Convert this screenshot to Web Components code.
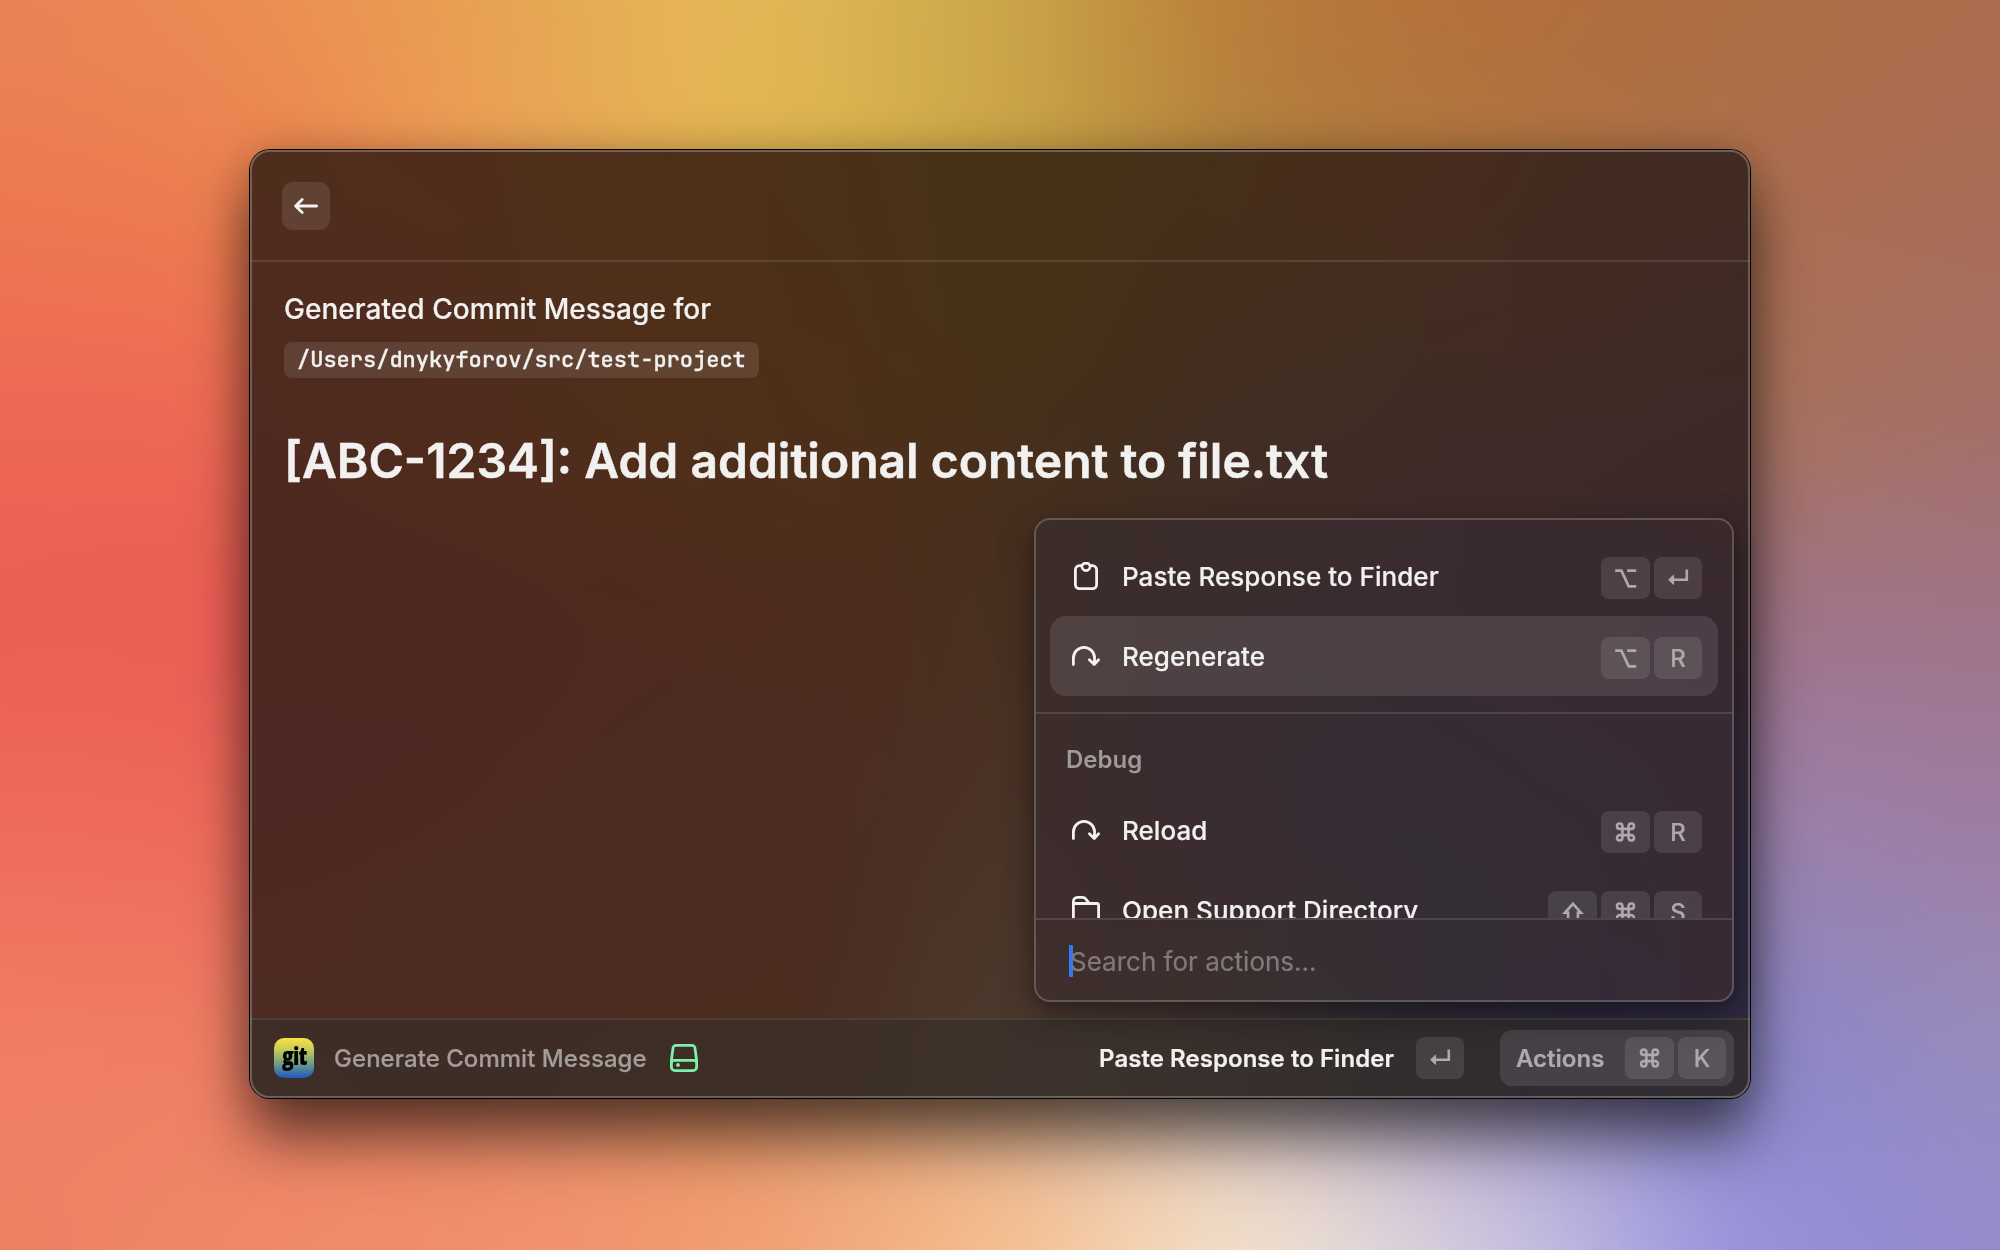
<!DOCTYPE html>
<html lang="en"><head><meta charset="utf-8"><title>Generate Commit Message</title>
<style>html,body{margin:0;height:100%;overflow:hidden}body{font-family:Inter,"Noto Sans",sans-serif}</style></head>
<body>
<rc-desktop>
  <rc-window>
    <rc-back-button slot="header"></rc-back-button>
    <rc-detail slot="content">
      <span slot="title">Generated Commit Message for</span>
      <span slot="path">/Users/dnykyforov/src/test-project</span>
      <span slot="message">[ABC-1234]: Add additional content to file.txt</span>
    </rc-detail>
    <rc-footer slot="footer"></rc-footer>
    <rc-action-panel slot="overlay"></rc-action-panel>
  </rc-window>
</rc-desktop>
<script>
const define=(name,html,setup)=>customElements.define(name,class extends HTMLElement{
  constructor(){super();this.attachShadow({mode:'open'})}
  connectedCallback(){this.shadowRoot.innerHTML=typeof html==='function'?html(this):html;if(setup)setup(this)}
});

// Paints a smooth colour mesh from a grid of colours (Catmull-Rom between the nodes).
class MeshGradient extends HTMLElement{
  constructor(){super();this.attachShadow({mode:'open'}).innerHTML='<style>:host{display:block}canvas{display:block;width:100%;height:100%}</style><canvas></canvas>'}
  set grid(rows){
    const g=rows.map(r=>r.trim().split(/\s+/).map(h=>[0,2,4].map(i=>parseInt(h.substr(i,2),16))));
    const c=this.shadowRoot.querySelector('canvas'),W=c.width=400,H=c.height=250,x2=c.getContext('2d'),im=x2.createImageData(W,H);
    const R=g.length,C=g[0].length,cl=(v,m)=>Math.max(0,Math.min(m,v));
    const cr=(a,b,c,d,t)=>b+.5*t*(c-a+t*(2*a-5*b+4*c-d+t*(3*(b-c)+d-a)));
    for(let y=0;y<H;y++){const fy=y/(H-1)*(R-1),iy=Math.min(R-2,Math.floor(fy)),ty=fy-iy;
      for(let x=0;x<W;x++){const fx=x/(W-1)*(C-1),ix=Math.min(C-2,Math.floor(fx)),tx=fx-ix,o=(y*W+x)*4;
        for(let k=0;k<3;k++){const v=[];
          for(let j=-1;j<3;j++){const r=g[cl(iy+j,R-1)];v.push(cr(r[cl(ix-1,C-1)][k],r[ix][k],r[ix+1][k],r[cl(ix+2,C-1)][k],tx))}
          im.data[o+k]=cr(v[0],v[1],v[2],v[3],ty)}
        im.data[o+3]=255}}
    x2.putImageData(im,0,0);
  }
}
customElements.define('rc-mesh',MeshGradient);

const wallpaper=[
 'ea8354 eb8d53 e7a353 e2b654 cba549 b97e3b b4703c ae6e46 ac6d4e',
 'ec7850 ec8050 eb9d55 dfb150 c9a347 b08240 ae7543 ac6f50 a96e58',
 'ed6855 ec6c54 e08550 d09a50 b8904a a57a48 a8724f a8725e a47068',
 'ec6054 ea6055 d87055 c08050 a88050 a07058 a07068 a07486 a07488',
 'ee6c5c ec6c5c dc7860 c88860 b09070 a08088 9a789a 9a80aa 9c7ea4',
 'f07c64 ee7e64 e88866 e09468 d8a888 c8b0b0 a898c0 9088c6 978abc',
 'ee8064 f08868 f0906c f1a074 f4be92 efdcca cac2de 9994da 948bcb'];
const glass=[
 '4f2d1c 502d1b 4e2f19 4b3116 473216 46301a 482c1c 442b20 402a22',
 '4f2b1f 4f2c1d 4f2f1a 4c3016 473216 442e1c 432d20 422b23 3f2a24',
 '4f2920 4f2b1e 4f2d1b 4d2f1a 472f1c 412d22 3f2c27 3e2a28 3c2928',
 '4f2822 4f2820 4e2a1f 4d2c1e 483020 422d26 3f2a2a 3c292b 38272c',
 '4e2822 4e2922 4d2b22 4c2c21 4a3225 443028 3b2c2e 352a31 32283a',
 '4e2a22 4d2b22 4c2c21 4b2d21 4b362a 433230 332c34 2e2838 2e2840',
 '4f2c22 4e2c22 4d2d20 4b2f21 4b392d 413432 302c35 2b2740 2e2a42'];
const panel=[
 '3c2d2a 3a2c2a 3a2b2d 392a2e 3a2a2c',
 '3c2d2b 3a2c2e 392b30 392a30 382932',
 '3c2d2b 392c30 352c34 372b35 382a34',
 '3d2d2c 3a2c2f 362d34 352c34 382a33',
 '3e2e2c 3b302e 362e33 352c38 372a35'];

define('rc-desktop',`<style>
 :host{display:grid;width:2000px;height:1250px;overflow:hidden}
 rc-mesh,.stage{grid-area:1/1}
 .stage{display:flex;justify-content:center;align-items:flex-start;padding-top:150px;z-index:1}
</style><rc-mesh></rc-mesh><div class="stage"><slot></slot></div>`,e=>{e.shadowRoot.querySelector('rc-mesh').grid=wallpaper});

define('rc-window',`<style>
 :host{display:grid;position:relative;width:1500px;height:948px;border-radius:20px;color:#f2f1f0;-webkit-text-stroke:.2px;letter-spacing:.045px;
  box-shadow:0 0 0 1px #000,0 40px 60px rgba(0,0,0,.58),0 0 44px rgba(0,0,0,.22)}
 rc-mesh{grid-area:1/1;border-radius:20px;overflow:hidden}
 .frame{grid-area:1/1;display:flex;flex-direction:column;z-index:1;border-radius:20px;overflow:hidden;min-height:0}
 header{height:110px;box-sizing:border-box;padding:32px;display:flex}
 main{flex:1;border-top:2px solid rgba(255,255,255,.11);min-height:0}
 footer{height:80px;box-sizing:border-box;border-top:2px solid rgba(255,255,255,.08);background:rgba(54,46,42,.62)}
 .edge{grid-area:1/1;z-index:2;border:2px solid rgba(255,255,255,.24);border-radius:20px;pointer-events:none}
 .overlay{position:absolute;right:16px;bottom:96px;z-index:3}
</style><rc-mesh></rc-mesh>
<div class="frame"><header><slot name="header"></slot></header><main><slot name="content"></slot></main><footer><slot name="footer"></slot></footer></div>
<div class="edge"></div><div class="overlay"><slot name="overlay"></slot></div>`,e=>{e.shadowRoot.querySelector('rc-mesh').grid=glass});

define('rc-back-button',`<style>:host{display:flex;width:48px;height:48px;border-radius:11px;background:rgba(255,255,255,.1);align-items:center;justify-content:center}svg{display:block}</style>
<svg width="28" height="28" viewBox="0 0 28 28" fill="none" stroke="#f4f2f1" stroke-width="2.8" stroke-linecap="round" stroke-linejoin="round"><path d="M3.6 14H24.6M10.2 7.4L3.6 14l6.6 6.6"/></svg>`);

define('rc-detail',`<style>
 :host{display:flex;flex-direction:column;align-items:flex-start;padding:29px 34px 0}
 .t{font-size:28px;line-height:36px;font-weight:500}
 .p{margin-top:15px;height:36px;box-sizing:border-box;padding:0 13px;border-radius:8px;background:rgba(255,255,255,.1);font:500 22px/36px "JetBrains Mono","DejaVu Sans Mono",monospace;letter-spacing:0;-webkit-text-stroke:.3px}
 .m{margin:53px 0 0;font-size:48px;line-height:60px;font-weight:600;letter-spacing:0;-webkit-text-stroke:.5px}
</style><div class="t"><slot name="title"></slot></div><div class="p"><slot name="path"></slot></div><h1 class="m"><slot name="message"></slot></h1>`);

const glyphs={
 option:'<path d="M4.2 5.6H10.4L17.7 21.4H25.2M16.2 5.6H25.2"/>',
 enter:'<path d="M23.8 4.5V14.8H9"/><path d="M5.6 14.8l5-4.700v9.400z" fill="currentColor" stroke-width="1"/>',
 cmd:'<path d="M11.9 10.4V7.7A2.7 2.7 0 1 0 9.2 10.4H20.8A2.7 2.7 0 1 0 18.1 7.7V19.3A2.7 2.7 0 1 0 20.8 16.6H9.2A2.7 2.7 0 1 0 11.9 19.3Z" transform="translate(-.5 -.5)"/>',
 shift:'<path d="M15 4.8L23 13.6H19.9V22.4H10.1V13.6H7Z"/>'};
define('rc-key',e=>{const k=e.getAttribute('key'),g=glyphs[k];return `<style>
 :host{display:flex;align-items:center;justify-content:center;width:${g&&k!=='enter'?49:48}px;height:42px;border-radius:8px;background:rgba(255,255,255,.1);color:#aeaaab;font-weight:500;font-size:24px;line-height:42px}
 svg{display:block;fill:none;stroke:currentColor;stroke-width:2.6}span{padding-top:1px}</style>${g?`<svg width="30" height="27" viewBox="0 0 30 27">${g}</svg>`:`<span>${k}</span>`}`});
define('rc-keys',e=>`<style>:host{display:flex;gap:4px}</style>${e.getAttribute('keys').split(' ').map(k=>`<rc-key key="${k}"></rc-key>`).join('')}`);

const icons={
 clipboard:'<path d="M11.8 5.7H9.4a4 4 0 0 0-4 4V24.6a4 4 0 0 0 4 4H22.6a4 4 0 0 0 4-4V9.7a4 4 0 0 0-4-4H20.2"/><path d="M13.8 3.4H18.2L20.2 5.7C20.2 8.5 18.3 10.6 16 10.6S11.8 8.5 11.8 5.7Z"/>',
 reload:'<path d="M3.4 24.6V18a10.6 10.6 0 0 1 21.2 0L24.3 24M19.4 19.8L24.2 24.6L28.6 19.8"/>',
 folder:'<path d="M3.4 10.4V7.4a4 4 0 0 1 4-4H12.4C14 3.4 15.2 4.1 16.1 5.3L19.4 9.5H26.6a2 2 0 0 1 2 2V25.6a3 3 0 0 1-3 3H6.4a3 3 0 0 1-3-3ZM3.4 9.5H19"/>'};
define('rc-action',e=>`<style>
 :host{display:flex;align-items:center;box-sizing:border-box;height:80px;flex:none;margin:0 14px;padding:0 16px 0 20px;border-radius:16px;font-size:26px;font-weight:500}
 :host([selected]){background:rgba(255,255,255,.1)}
 svg{fill:none;stroke:#f4f2f2;stroke-width:2.8;stroke-linecap:round;stroke-linejoin:round;flex:none}
 .l{margin-left:20px;flex:1;line-height:32px;margin-top:2px}
 rc-keys{margin-top:4px}
</style><svg width="32" height="32" viewBox="0 0 32 32">${icons[e.getAttribute('icon')]}</svg><span class="l"><slot></slot></span><rc-keys keys="${e.getAttribute('keys')}"></rc-keys>`);

define('rc-action-panel',`<style>
 :host{display:grid;width:700px;height:484px;border-radius:16px;box-shadow:0 12px 36px rgba(0,0,0,.4),0 2px 10px rgba(0,0,0,.15)}
 rc-mesh{grid-area:1/1;border-radius:16px;overflow:hidden}
 .body{grid-area:1/1;z-index:1;box-sizing:border-box;border:2px solid rgba(255,255,255,.2);border-radius:16px;display:flex;flex-direction:column;min-height:0;overflow:hidden}
 .list{flex:1;min-height:0;overflow:hidden;display:flex;flex-direction:column;padding-top:16px}
 hr{flex:none;width:100%;height:2px;border:0;margin:16px 0 0;background:rgba(255,255,255,.12)}
 .sec{flex:none;height:76px;box-sizing:border-box;padding:30px 30px 0;font-size:24px;line-height:32px;font-weight:600;letter-spacing:0;color:#a09a9b;-webkit-text-stroke:0}
 .search{height:82px;flex:none;box-sizing:border-box;border-top:2px solid rgba(255,255,255,.12);padding:0 33px;display:flex;align-items:center;font-size:26px;line-height:32px;letter-spacing:0;color:#807a7c}
 .caret{width:4px;height:32px;border-radius:1px;background:#3478f6;margin-top:2px}
 .ph{margin-left:-3px;margin-top:4px}
</style><rc-mesh></rc-mesh><div class="body"><div class="list">
<rc-action icon="clipboard" keys="option enter">Paste Response to Finder</rc-action>
<rc-action icon="reload" keys="option R" selected>Regenerate</rc-action><hr>
<div class="sec">Debug</div>
<rc-action icon="reload" keys="cmd R">Reload</rc-action>
<rc-action icon="folder" keys="shift cmd S">Open Support Directory</rc-action>
</div><div class="search"><span class="caret"></span><span class="ph">Search for actions...</span></div></div>`,e=>{e.shadowRoot.querySelector('rc-mesh').grid=panel});

define('rc-footer',`<style>
 :host{display:flex;height:78px;box-sizing:border-box;align-items:center;padding:0 16px 2px 24px;font-size:24px;line-height:32px;font-weight:500}
 .logo{width:40px;height:40px;border-radius:10px;background:linear-gradient(#fde047,#c3cb58 30%,#6f9c86 65%,#1f57c3);color:#000;display:flex;justify-content:center;font:800 25.5px/34px "Open Sans",sans-serif;letter-spacing:-1px}
 .logo span{transform:scaleX(.76)}
 .name{margin:2px 0 0 20px;color:#a49d9a}
 svg{margin-left:21px;display:block}
 .main{margin:2px 22px 0 auto;font-weight:600}
 .act{display:flex;align-items:center;width:234px;height:56px;box-sizing:border-box;margin-left:36px;border-radius:12px;background:rgba(255,255,255,.1);padding:0 8px 0 16px;font-weight:600;color:#aeaaac;letter-spacing:0}
 .act span{margin-top:2px}
 .act rc-keys{margin-left:auto}
</style><span class="logo"><span>git</span></span><span class="name">Generate Commit Message</span>
<svg width="32" height="32" viewBox="0 0 32 32" fill="none" stroke="#7ff0a8" stroke-width="2.8" stroke-linejoin="round"><path d="M7.6 3.4H24.4a3 3 0 0 1 2.500 2.200L28.600 18V25a3.600 3.600 0 0 1-3.600 3.600H7A3.600 3.600 0 0 1 3.400 25V18L5.100 5.600A3 3 0 0 1 7.600 3.400ZM3.400 21a3 3 0 0 1 3-2.700H25.600a3 3 0 0 1 3 2.700"/><circle cx="10" cy="23" r="1.900" fill="#7ff0a8" stroke="none"/></svg>
<span class="main">Paste Response to Finder</span><rc-keys keys="enter"></rc-keys>
<span class="act"><span>Actions</span><rc-keys keys="cmd K"></rc-keys></span>`);
</script>
</body></html>
